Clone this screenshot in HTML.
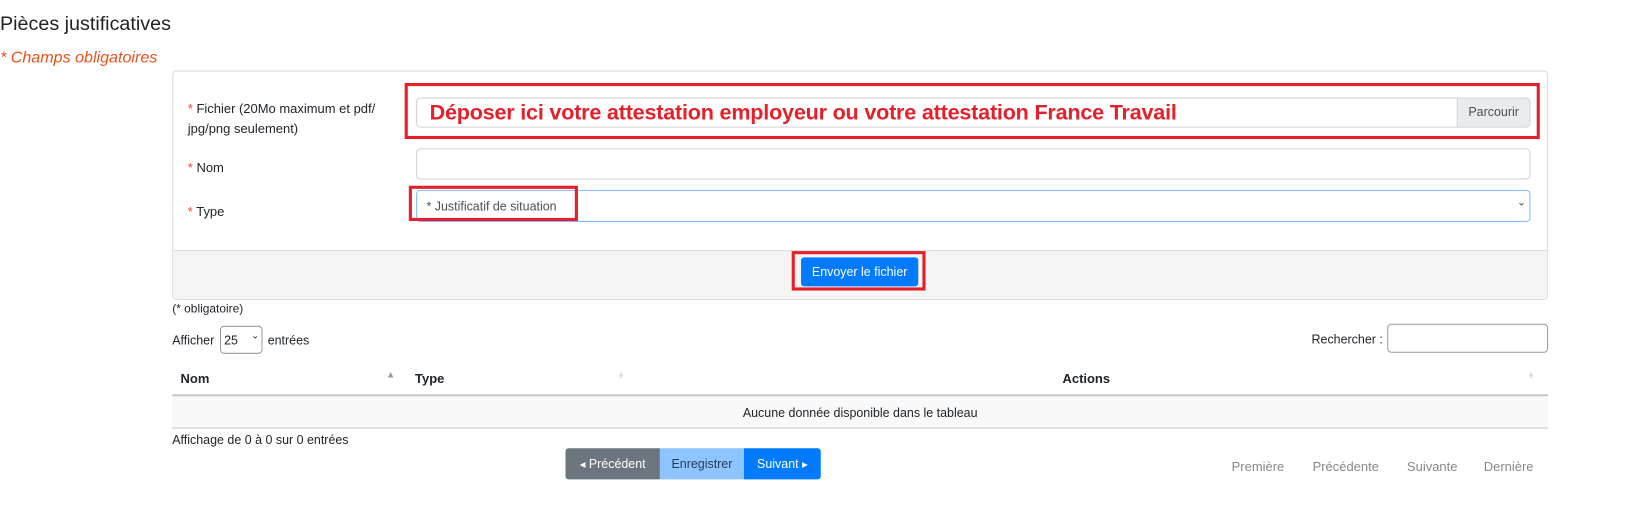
<!DOCTYPE html>
<html><head><meta charset="utf-8"><style>
*{box-sizing:border-box;margin:0;padding:0}
body{width:1627px;height:528px;background:#fff;font-family:"Liberation Sans",sans-serif;color:#212529;position:relative;overflow:hidden}
#w{position:absolute;left:0;top:0;width:1568px;height:509px;transform:scale(1.0376);transform-origin:0 0}
.a{position:absolute;white-space:nowrap}
.s{font-size:12.5px}
.r{color:#e8501a}
.box{position:absolute;border:1px solid #ced4da;border-radius:4px;background:#fff}
.red{position:absolute;border:3px solid #e4202a}
.th{font-weight:bold;font-size:12.5px}
.pg{font-size:12.5px;color:#888}
</style></head><body><div id="w">
<div class="a" style="left:0;top:13px;font-size:19px;color:#222">Pièces justificatives</div>
<div class="a" style="left:0;top:47px;font-size:15.5px;font-style:italic;color:#e8501a">* Champs obligatoires</div>

<div style="position:absolute;left:166px;top:68px;width:1326px;height:221px;border:1px solid #dcdcdc;border-radius:4px;overflow:hidden">
 <div style="position:absolute;left:0;right:0;top:172px;bottom:0;background:#f5f5f5;border-top:1px solid #dcdcdc"></div>
</div>
<div class="a s" style="left:181px;top:96px;line-height:19px"><span class="r">*</span> Fichier (20Mo maximum et pdf/<br>jpg/png seulement)</div>
<div class="a s" style="left:181px;top:155px"><span class="r">*</span> Nom</div>
<div class="a s" style="left:181px;top:197px"><span class="r">*</span> Type</div>

<div class="box" style="left:401px;top:94px;width:1074px;height:29px;overflow:hidden">
 <div style="position:absolute;right:0;top:0;bottom:0;width:70px;background:#e9ecef;border-left:1px solid #ced4da;font-size:12px;line-height:27px;text-align:center;color:#495057">Parcourir</div>
</div>
<div class="a" style="left:414px;top:97px;font-size:20.8px;font-weight:bold;color:#e4202a;letter-spacing:-0.2px">Déposer ici votre attestation employeur ou votre attestation France Travail</div>
<div class="red" style="left:390px;top:80px;width:1094px;height:54px"></div>

<div class="box" style="left:401px;top:143px;width:1074px;height:30px"></div>
<div class="box" style="left:401px;top:183px;width:1074px;height:31px;border-color:#80bdff"></div>
<div class="a" style="left:411px;top:192px;font-size:12px;color:#495057">* Justificatif de situation</div>
<div class="a" style="left:1462px;top:190px;font-size:10px;color:#444">&#8964;</div>
<div class="red" style="left:394px;top:179px;width:163px;height:34px"></div>

<div class="a" style="left:772px;top:248px;width:113px;height:28px;background:#007bff;border-radius:3px;color:#fff;font-size:12px;line-height:28px;text-align:center">Envoyer le fichier</div>
<div class="red" style="left:763px;top:242px;width:129px;height:38px"></div>

<div class="a" style="left:166px;top:292px;font-size:11.5px">(* obligatoire)</div>
<div class="a" style="left:166px;top:321px;font-size:12px">Afficher</div>
<div class="box" style="left:212px;top:314px;width:41px;height:27px;border-color:#999"></div>
<div class="a" style="left:216px;top:321px;font-size:12px">25</div>
<div class="a" style="left:242px;top:318px;font-size:9px">&#8964;</div>
<div class="a" style="left:258px;top:321px;font-size:12px">entrées</div>
<div class="a" style="left:1264px;top:320px;font-size:12px">Rechercher :</div>
<div class="box" style="left:1337px;top:312px;width:155px;height:28px;border-color:#999"></div>

<div class="a th" style="left:174px;top:358px">Nom</div>
<div class="a" style="left:372px;top:356px;font-size:9px;color:#999">&#9650;</div>
<div class="a th" style="left:400px;top:358px">Type</div>
<div class="a" style="left:596px;top:357px;font-size:10px;color:#ddd">&#9830;</div>
<div class="a th" style="left:1024px;top:358px">Actions</div>
<div class="a" style="left:1473px;top:357px;font-size:10px;color:#ddd">&#9830;</div>
<div style="position:absolute;left:166px;top:380px;width:1326px;height:33px;background:#f9f9f9;border-top:2px solid #c8c8c8;border-bottom:1px solid #c8c8c8"></div>
<div class="a" style="left:0;width:1658px;text-align:center;top:391px;font-size:12px">Aucune donnée disponible dans le tableau</div>
<div class="a" style="left:166px;top:417px;font-size:12px">Affichage de 0 à 0 sur 0 entrées</div>

<div class="a" style="left:545px;top:432px;width:91px;height:30px;background:#6c757d;color:#fff;font-size:12px;line-height:30px;text-align:center;border-radius:3px 0 0 3px"><span style="font-size:7px;vertical-align:1px">&#9664;</span> Précédent</div>
<div class="a" style="left:636px;top:432px;width:81px;height:30px;background:#8ec4ff;color:#1e3a5a;font-size:12px;line-height:30px;text-align:center">Enregistrer</div>
<div class="a" style="left:717px;top:432px;width:74px;height:30px;background:#007bff;color:#fff;font-size:12px;line-height:30px;text-align:center;border-radius:0 3px 3px 0">Suivant <span style="font-size:7px;vertical-align:1px">&#9654;</span></div>

<div class="a pg" style="left:1187px;top:443px">Première</div>
<div class="a pg" style="left:1265px;top:443px">Précédente</div>
<div class="a pg" style="left:1356px;top:443px">Suivante</div>
<div class="a pg" style="left:1430px;top:443px">Dernière</div>
</div></body></html>
